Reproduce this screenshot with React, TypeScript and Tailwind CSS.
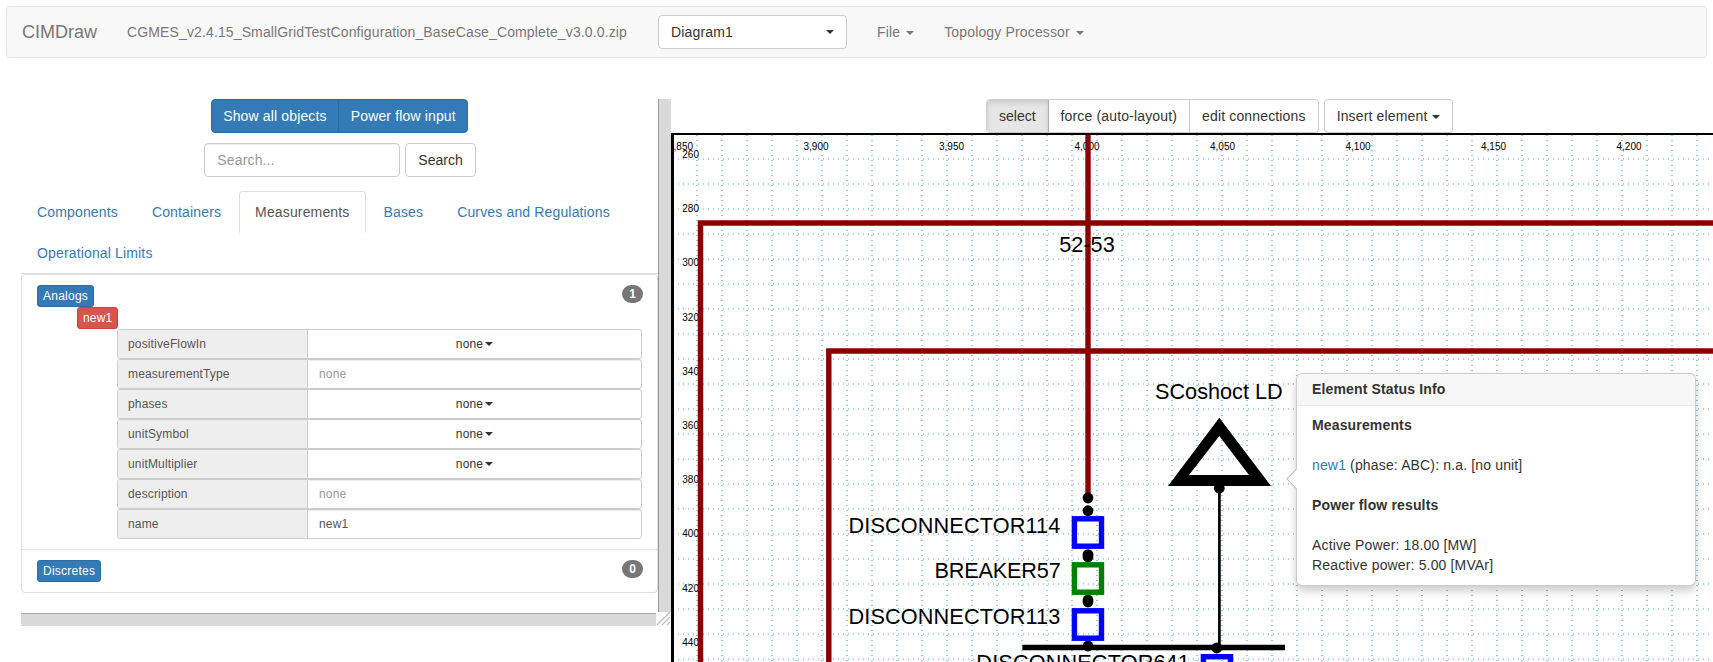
const TABS = ["Components", "Containers", "Measurements", "Bases", "Curves and Regulations", "Operational Limits"];

const ROWS = [
  { label: "positiveFlowIn", kind: "select" },
  { label: "measurementType", kind: "empty" },
  { label: "phases", kind: "select" },
  { label: "unitSymbol", kind: "select" },
  { label: "unitMultiplier", kind: "select" },
  { label: "description", kind: "empty" },
  { label: "name", kind: "value" },
];

const X_TICKS = [
  { x: 680.5, label: "3,850" },
  { x: 816, label: "3,900" },
  { x: 951.5, label: "3,950" },
  { x: 1087, label: "4,000" },
  { x: 1222.5, label: "4,050" },
  { x: 1358, label: "4,100" },
  { x: 1493.5, label: "4,150" },
  { x: 1629, label: "4,200" },
];

const Y_TICKS = ["260", "280", "300", "320", "340", "360", "380", "400", "420", "440"];

const GRID_X = Array.from({ length: 41 }, (_, i) => 697 + i * 25);
const GRID_Y = Array.from({ length: 21 }, (_, i) => 159 + i * 25);

function Caret({ flush }: { flush?: boolean }) {
  return <span className={flush ? "inline-block w-0 h-0 align-middle border-x-4 border-t-4 border-x-transparent border-t-current" : "inline-block w-0 h-0 ml-[2px] align-middle border-x-4 border-t-4 border-x-transparent border-t-current"} />;
}

function PropertyRow({ label, kind }: { label: string; kind: string }) {
  return (
    <div className="flex h-[30px] rounded-[3px] border border-[#ccc] text-xs leading-[18px] overflow-hidden">
      <div className="w-[190px] shrink-0 bg-[#eee] border-r border-[#ccc] px-[10px] flex items-center text-[#555]">{label}</div>
      {kind === "select" && (
        <div className="flex-1 flex items-center justify-center text-[#333]">
          none
          <Caret />
        </div>
      )}
      {kind === "empty" && <div className="flex-1 flex items-center px-[10px] ml-px text-[#999] shadow-[inset_0_1px_1px_rgba(0,0,0,0.075)]">none</div>}
      {kind === "value" && <div className="flex-1 flex items-center px-[10px] ml-px text-[#555] shadow-[inset_0_1px_1px_rgba(0,0,0,0.075)]">new1</div>}
    </div>
  );
}

function ObjectTree() {
  return (
    <div className="w-[637px] rounded border border-[#ddd] shrink-0">
      <div className="px-[15px] py-[10px] border-b border-[#ddd] flex flex-col">
        <div className="flex justify-between items-start">
          <span className="h-[22px] px-[5px] rounded-[3px] bg-[#337ab7] border border-[#2e6da4] text-white text-xs leading-[20px] tracking-[0.25px]">Analogs</span>
          <span className="h-[18px] px-[7px] rounded-[10px] bg-[#777] text-white text-xs font-bold leading-[18px] mr-[-1px]">1</span>
        </div>
        <span className="self-start ml-[40px] h-[22px] px-[5px] rounded-[3px] bg-[#d9534f] border border-[#d43f3a] text-white text-xs leading-[20px]">new1</span>
        <div className="ml-[80px] flex flex-col">
          {ROWS.map((row) => (
            <PropertyRow key={row.label} label={row.label} kind={row.kind} />
          ))}
        </div>
      </div>
      <div className="px-[15px] py-[10px] flex justify-between items-start">
        <span className="h-[22px] px-[5px] rounded-[3px] bg-[#337ab7] border border-[#2e6da4] text-white text-xs leading-[20px] tracking-[0.25px]">Discretes</span>
        <span className="h-[18px] px-[7px] rounded-[10px] bg-[#777] text-white text-xs font-bold leading-[18px] mr-[-1px]">0</span>
      </div>
    </div>
  );
}

function LeftPane() {
  return (
    <div className="relative w-[650px] h-[527px] ml-[21px] shrink-0">
      <div className="flex h-[513px]">
        <div className="w-[637px] flex flex-col items-center">
          <div className="flex h-[34px] rounded overflow-hidden bg-[#337ab7] border border-[#2e6da4] text-white">
            <div className="px-[11.5px] leading-[32px] border-r border-[#2e6da4]">Show all objects</div>
            <div className="px-[11.5px] leading-[32px]">Power flow input</div>
          </div>
          <div className="flex gap-[5px] mt-[10px] ml-px">
            <div className="w-[196px] h-[34px] rounded border border-[#ccc] px-3 leading-[32px] text-[#999] shadow-[inset_0_1px_1px_rgba(0,0,0,0.075)]">Search...</div>
            <div className="h-[34px] rounded border border-[#ccc] px-3 leading-[32px] tracking-normal text-[#333]">Search</div>
          </div>
          <div className="w-full flex flex-wrap mt-[14px] border-b border-[#ddd]">
            {TABS.map((tab) => {
              const active = tab === "Measurements";
              return (
                <div
                  key={tab}
                  className={
                    active
                      ? "h-[42px] -mb-px mr-[2px] px-[15px] py-[10px] rounded-t border border-[#ddd] border-b-white bg-white text-[#555]"
                      : "h-[42px] -mb-px mr-[2px] px-[15px] py-[10px] border border-transparent text-[#337ab7]"
                  }
                >
                  {tab}
                </div>
              );
            })}
          </div>
          <ObjectTree />
        </div>
        <div className="w-[13px] bg-[#d9d9d9] border-l border-[#999]" />
      </div>
      <div className="w-[635px] h-[13px] mt-px bg-[#d9d9d9] border-t border-[#aaa]" />
      <svg className="absolute right-0 bottom-0" width="15" height="15" viewBox="0 0 15 15">
        <path d="M1 14L14 1M6 14L14 6M11 14L14 11" stroke="#bbb" strokeWidth="1.2" fill="none" />
      </svg>
    </div>
  );
}

function Diagram() {
  return (
    <svg className="block tracking-normal" width="1039" height="527" viewBox="674 135 1039 527" fontFamily="'Liberation Sans', sans-serif">
      {GRID_X.map((x) => (
        <line key={x} x1={x} y1="135" x2={x} y2="662" stroke="#4aa8c4" strokeWidth="1.2" strokeDasharray="1 4" />
      ))}
      {GRID_Y.map((y) => (
        <line key={y} x1="673" y1={y} x2="1713" y2={y} stroke="#4aa8c4" strokeWidth="1.2" strokeDasharray="1 4" />
      ))}
      {X_TICKS.map((t) => (
        <text key={t.label} x={t.x} y="150" fontSize="10" textAnchor="middle" fill="#000">
          {t.label}
        </text>
      ))}
      {Y_TICKS.map((t, i) => (
        <text key={t} x="699" y={158 + i * 54.2} fontSize="10" textAnchor="end" fill="#000">
          {t}
        </text>
      ))}
      <g stroke="#8b0000" strokeWidth="5.4" fill="none">
        <path d="M1713 223H700.5V662" />
        <path d="M1713 351H828.8V662" />
        <path d="M1088 135V498" />
      </g>
      <g fill="#000">
        <circle cx="1088" cy="498" r="5.4" />
        <circle cx="1088" cy="510.7" r="5.4" />
        <circle cx="1088" cy="554.6" r="5.4" />
        <circle cx="1088" cy="557" r="5.4" />
        <circle cx="1088" cy="600" r="5.4" />
        <circle cx="1088" cy="602" r="5.4" />
        <circle cx="1088" cy="646" r="5.4" />
        <circle cx="1219.3" cy="488.3" r="5.4" />
        <circle cx="1216.8" cy="648" r="5.4" />
      </g>
      <path d="M1022.4 647.5H1285" stroke="#000" strokeWidth="5.4" />
      <path d="M1219.4 488V647" stroke="#000" strokeWidth="2.7" />
      <path d="M1219.3 417.7L1271 486H1168ZM1219.3 436L1189 475H1249Z" fill="#000" fillRule="evenodd" />
      <g fill="none" strokeWidth="5.42">
        <rect x="1074.4" y="518.8" width="27.1" height="27.4" stroke="#0000ff" />
        <rect x="1074.4" y="564.8" width="27.1" height="27.4" stroke="#008000" />
        <rect x="1074.4" y="610.8" width="27.1" height="27.4" stroke="#0000ff" />
        <rect x="1203.4" y="656.7" width="27.1" height="27.4" stroke="#0000ff" />
      </g>
      <g fontSize="21.68" fill="#000">
        <text x="1087" y="252" textAnchor="middle">52-53</text>
        <text x="1155" y="399">SCoshoct LD</text>
        <text x="1060.5" y="533" textAnchor="end" letterSpacing="0.14">DISCONNECTOR114</text>
        <text x="1060.5" y="578" textAnchor="end" letterSpacing="-0.2">BREAKER57</text>
        <text x="1060.5" y="624" textAnchor="end" letterSpacing="0.14">DISCONNECTOR113</text>
        <text x="1190" y="670" textAnchor="end" letterSpacing="0.14">DISCONNECTOR641</text>
      </g>
    </svg>
  );
}

function StatusPopover() {
  return (
    <div className="absolute left-[625px] top-[274px] w-[400px] h-[213px] bg-white rounded-md border border-black/20 shadow-[0_5px_10px_rgba(0,0,0,0.2)]">
      <div className="absolute left-[-8px] top-[98px] w-[14px] h-[14px] rotate-45 bg-white border-l border-b border-black/25" />
      <div className="relative h-[32px] pl-[15px] pr-[14px] py-[5px] bg-[#f7f7f7] border-b border-[#ebebeb] rounded-t-md font-bold text-[#333]">Element Status Info</div>
      <div className="relative pl-[15px] pr-[14px] py-[9px] text-[#333]">
        <div className="font-bold">Measurements</div>
        <div className="mt-[20px]">
          <span className="text-[#337ab7]">new1</span> (phase: ABC): n.a. [no unit]
        </div>
        <div className="mt-[20px] font-bold">Power flow results</div>
        <div className="mt-[20px]">Active Power: 18.00 [MW]</div>
        <div>Reactive power: 5.00 [MVAr]</div>
      </div>
    </div>
  );
}

export default function App() {
  return (
    <div className="w-[1713px] h-[662px] overflow-hidden bg-white text-sm leading-5 tracking-[0.15px] text-[#333] font-['Liberation_Sans',sans-serif]">
      <nav className="mx-[6px] mt-[6px] h-[52px] flex items-center pl-[15px] rounded bg-[#f8f8f8] border border-[#e7e7e7] text-[#777]">
        <span className="text-lg tracking-normal">CIMDraw</span>
        <span className="ml-[30px] tracking-[0.13px]">CGMES_v2.4.15_SmallGridTestConfiguration_BaseCase_Complete_v3.0.0.zip</span>
        <div className="ml-[31px] w-[189px] h-[34px] px-3 flex items-center justify-between rounded border border-[#ccc] bg-white text-[#333]">
          Diagram1
          <Caret />
        </div>
        <span className="ml-[30px]">
          File <Caret />
        </span>
        <span className="ml-[30px]">
          Topology Processor <Caret />
        </span>
      </nav>
      <div className="flex mt-[41px]">
        <LeftPane />
        <div className="relative flex-1 flex flex-col">
          <div className="h-[34px] flex pl-[315px] gap-[5px]">
            <div className="flex rounded border border-[#ccc] overflow-hidden">
              <div className="px-3 leading-[32px] tracking-normal bg-[#e6e6e6] shadow-[inset_0_3px_5px_rgba(0,0,0,0.125)] border-r border-[#adadad]">select</div>
              <div className="px-3 leading-[32px] border-r border-[#ccc]">force (auto-layout)</div>
              <div className="px-3 leading-[32px]">edit connections</div>
            </div>
            <div className="px-3 leading-[32px] rounded border border-[#ccc]">
              Insert element <Caret flush />
            </div>
          </div>
          <div className="border-t-2 border-l-[3px] border-black h-[529px]">
            <Diagram />
          </div>
          <StatusPopover />
        </div>
      </div>
    </div>
  );
}
